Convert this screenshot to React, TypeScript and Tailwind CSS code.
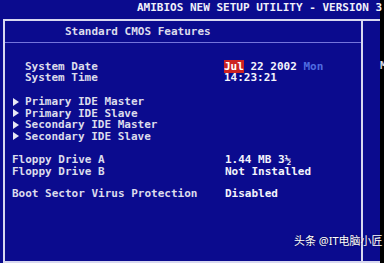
import React from 'react'

const mono = { fontFamily: '"DejaVu Sans Mono", "Liberation Mono", monospace' }

function Arrow() {
  return (
    <svg width="6" height="8" viewBox="0 0 6 8" className="shrink-0">
      <path d="M0 0 L6 4 L0 8 Z" fill="#e8e8f4" />
    </svg>
  )
}

function Row({ label, value, arrow }: { label: string; value?: React.ReactNode; arrow?: boolean }) {
  return (
    <div className="flex items-center h-[11.5px]">
      <div className="w-[9px] flex items-center">{arrow && <Arrow />}</div>
      <div className="w-[202px] pl-[3px]">{label}</div>
      <div className="text-[#f4f4fc]">{value}</div>
    </div>
  )
}

export default function App() {
  return (
    <div
      className="relative w-[384px] h-[263px] overflow-hidden flex bg-[#0b0b8e] text-[11px] font-bold leading-[11px] text-[#dcdcec]"
      style={mono}
    >
      <div className="w-[380px] shrink-0 flex flex-col">
        {/* top title bar */}
        <div className="h-[19px] pl-[137px] pt-[2px] whitespace-nowrap text-[#f0f0fa] relative z-10">
          AMIBIOS NEW SETUP UTILITY - VERSION 3
        </div>

        <div className="flex flex-1">
          {/* main panel */}
          <div className="ml-[3px] w-[360px] shrink-0 border-2 border-[#d8d8f0] flex flex-col">
            <div className="h-[22px] flex items-center pl-[60px] border-b border-[#7474dc]">
              Standard CMOS Features
            </div>

            <div className="pl-[8px]">
              <div className="mt-[18px]">
                <div className="flex items-center h-[11px]">
                  <div className="w-[9px]" />
                  <div className="w-[202px] pl-[3px]">System Date</div>
                  <div className="text-[#f4f4fc]">
                    <span className="bg-[#cc2222] text-white">Jul</span> 22 2002{' '}
                    <span className="text-[#4f6ce0]">Mon</span>
                  </div>
                </div>
                <div className="flex items-center h-[11px]">
                  <div className="w-[9px]" />
                  <div className="w-[202px] pl-[3px]">System Time</div>
                  <div className="text-[#f4f4fc]">14:23:21</div>
                </div>
              </div>

              <div className="mt-[13px]">
                <Row arrow label="Primary IDE Master" />
                <Row arrow label="Primary IDE Slave" />
                <Row arrow label="Secondary IDE Master" />
                <Row arrow label="Secondary IDE Slave" />
              </div>

              <div className="mt-[11px] -ml-[9px]">
                <div className="flex items-center h-[12px]">
                  <div className="w-[221px] pl-[8px]">Floppy Drive A</div>
                  <div className="text-[#f4f4fc]">1.44 MB 3½</div>
                </div>
                <div className="flex items-center h-[12px]">
                  <div className="w-[221px] pl-[8px]">Floppy Drive B</div>
                  <div className="text-[#f4f4fc]">Not Installed</div>
                </div>
              </div>

              <div className="mt-[10px] -ml-[9px] flex items-center h-[12px]">
                <div className="w-[221px] pl-[8px]">Boot Sector Virus Protection</div>
                <div className="text-[#f4f4fc]">Disabled</div>
              </div>
            </div>
          </div>

          {/* right help panel */}
          <div className="flex-1 min-w-0 border-t-2 border-b-2 border-[#d8d8f0] pt-[39px] relative z-10 overflow-visible whitespace-nowrap">
            <div className="ml-[17px]">M</div>
          </div>
        </div>
      </div>
      <div className="w-[4px] bg-black" />

      {/* watermark */}
      <div
        className="absolute left-[294px] top-[234px] text-[11px] font-normal leading-[14px] text-white whitespace-nowrap [text-shadow:0_0_2px_rgba(0,0,0,0.6)]"
        style={{ fontFamily: '"Noto Sans", "Noto Sans CJK SC", sans-serif' }}
      >
        头条 @IT电脑小匠
      </div>
    </div>
  )
}
